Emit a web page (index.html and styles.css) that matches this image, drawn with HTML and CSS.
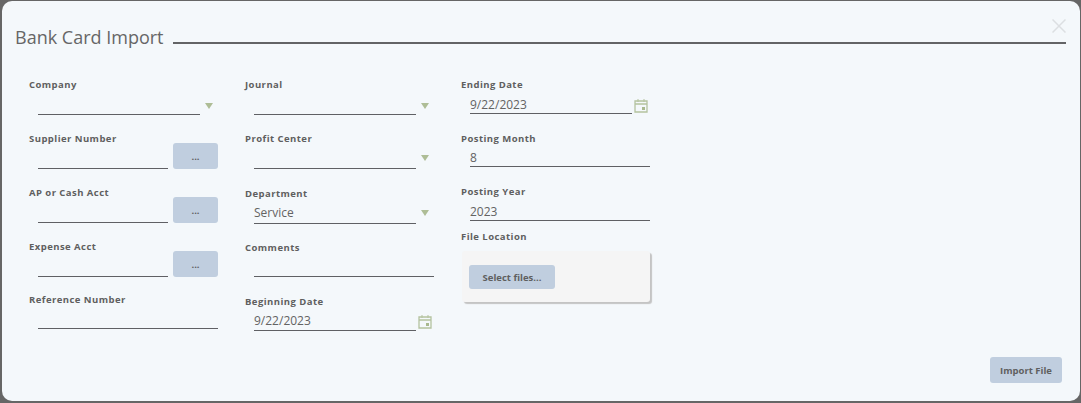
FILE: index.html
```html
<!DOCTYPE html>
<html lang="en">
<head>
<meta charset="utf-8">
<title>Bank Card Import</title>
<link rel="stylesheet" href="styles.css">
</head>
<body>
<div class="dialog">
  <button class="close" aria-label="Close">
    <svg width="14" height="14" viewBox="0 0 14 14"><path d="M.5 .5 13.5 13.5M13.5 .5 .5 13.5" stroke="#dcdfe2" stroke-width="1.5" fill="none"/></svg>
  </button>
  <header class="title-row">
    <h1>Bank Card Import</h1>
    <div class="title-rule"></div>
  </header>
  <div class="columns">
    <div class="col col-a">
      <div class="field"><label>Company</label>
        <div class="control"><div class="line w162"></div><svg class="arrow" width="8" height="6" viewBox="0 0 8 6"><path d="M0 0H8L4 6Z" fill="#aebd96"/></svg></div></div>
      <div class="field"><label>Supplier Number</label>
        <div class="control"><div class="line w130"></div><button class="btn dots">...</button></div></div>
      <div class="field"><label>AP or Cash Acct</label>
        <div class="control"><div class="line w130"></div><button class="btn dots">...</button></div></div>
      <div class="field h53"><label>Expense Acct</label>
        <div class="control"><div class="line w130"></div><button class="btn dots">...</button></div></div>
      <div class="field"><label>Reference Number</label>
        <div class="control short"><div class="line w180"></div></div></div>
    </div>
    <div class="col col-b">
      <div class="field"><label>Journal</label>
        <div class="control"><div class="line w162"></div><svg class="arrow" width="8" height="6" viewBox="0 0 8 6"><path d="M0 0H8L4 6Z" fill="#aebd96"/></svg></div></div>
      <div class="field h55"><label>Profit Center</label>
        <div class="control"><div class="line w162"></div><svg class="arrow raised" width="8" height="6" viewBox="0 0 8 6"><path d="M0 0H8L4 6Z" fill="#aebd96"/></svg></div></div>
      <div class="field"><label>Department</label>
        <div class="control"><div class="line w162 mid">Service</div><svg class="arrow raised" width="8" height="6" viewBox="0 0 8 6"><path d="M0 0H8L4 6Z" fill="#aebd96"/></svg></div></div>
      <div class="field"><label>Comments</label>
        <div class="control short"><div class="line w180"></div></div></div>
      <div class="field"><label>Beginning Date</label>
        <div class="control short"><div class="line w162 near">9/22/2023</div>
          <svg class="cal cal-up" width="14" height="15" viewBox="0 0 14 15"><path d="M1 3H13V14H1ZM1 6H13" stroke="#b4c29f" stroke-width="1.3" fill="none"/><path d="M4 1V4M10 1V4" stroke="#b4c29f" fill="none"/><rect x="8" y="9" width="3" height="3" fill="#a9b98f"/></svg></div></div>
    </div>
    <div class="col col-c">
      <div class="field"><label>Ending Date</label>
        <div class="control short"><div class="line w162 low">9/22/2023</div>
          <svg class="cal" width="14" height="15" viewBox="0 0 14 15"><path d="M1 3H13V14H1ZM1 6H13" stroke="#b4c29f" stroke-width="1.3" fill="none"/><path d="M4 1V4M10 1V4" stroke="#b4c29f" fill="none"/><rect x="8" y="9" width="3" height="3" fill="#a9b98f"/></svg></div></div>
      <div class="field h53"><label>Posting Month</label>
        <div class="control shorter"><div class="line w180 low">8</div></div></div>
      <div class="field h45"><label>Posting Year</label>
        <div class="control short"><div class="line w180 low">2023</div></div></div>
      <div class="field"><label>File Location</label>
        <div class="dropzone"><button class="btn select">Select files...</button></div></div>
    </div>
  </div>
  <footer class="footer"><button class="btn import">Import File</button></footer>
</div>
</body>
</html>
```
FILE: styles.css
```css
* { box-sizing: border-box; }
html, body { height: 100%; }
body {
  margin: 0;
  padding: 1px 1px 2px 2px;
  background: #666;
  font-family: "Open Sans", "Liberation Sans", sans-serif;
  color: #555;
  overflow: hidden;
}
.dialog {
  position: relative;
  display: flex;
  flex-direction: column;
  height: 400px;
  background: #f4f8fb;
  border-radius: 10px;
  padding: 0 14px 0 13px;
}
.close {
  position: absolute;
  top: 18px;
  right: 14px;
  display: flex;
  padding: 0;
  border: 0;
  background: none;
}
.title-row {
  display: flex;
  align-items: flex-end;
  gap: 9px;
  height: 43px;
  padding-top: 22px;
}
.title-row h1 {
  margin: 0 0 -6px;
  font-size: 18px;
  font-weight: 400;
  line-height: 26px;
  color: #666;
  white-space: nowrap;
}
.title-rule { flex: 1; height: 2px; background: #636466; }
.columns {
  display: flex;
  padding: 33px 0 0 14px;
}
.col { width: 216px; }
.field { height: 54px; }
.h53 { height: 53px; }
.h55 { height: 55px; }
.h45 { height: 45px; }
.field label {
  display: block;
  font-size: 9.5px;
  font-weight: 700;
  line-height: 16px;
  letter-spacing: .45px;
  color: #5f5f5f;
}
.control {
  display: flex;
  align-items: flex-end;
  height: 22px;
  margin-left: 9px;
}
.short { height: 21px; }
.shorter { height: 20px; }
.line {
  height: 20px;
  border-bottom: 1px solid #5f6064;
  font-size: 12px;
  line-height: 16px;
  color: #636363;
}
.mid { line-height: 18px; }
.near { line-height: 20px; }
.low { line-height: 22px; }
.w130 { width: 130px; }
.w162 { width: 162px; }
.w180 { width: 180px; }
.arrow { margin: 0 0 6px 5px; }
.raised { margin-bottom: 8px; }
.cal { margin: 0 0 1px 2px; }
.cal-up { margin-bottom: 2px; }
.btn {
  border: 0;
  border-radius: 3px;
  background: #c0cedf;
  font-family: inherit;
  font-size: 9.5px;
  font-weight: 700;
  color: #5f5f5f;
  padding: 0;
}
.dots { width: 45px; height: 26px; margin-left: 5px; }
.dropzone {
  display: flex;
  align-items: flex-start;
  width: 188px;
  height: 51px;
  margin: 6px 0 0 1px;
  padding: 14px 0 0 7px;
  background: #f5f5f5;
  border-radius: 3px;
  box-shadow: 2px 2px 1px #c4c4c4;
}
.select { width: 86px; height: 24px; }
.footer {
  margin-top: auto;
  display: flex;
  justify-content: flex-end;
  padding: 0 4px 18px 0;
}
.import { width: 72px; height: 26px; }
```
